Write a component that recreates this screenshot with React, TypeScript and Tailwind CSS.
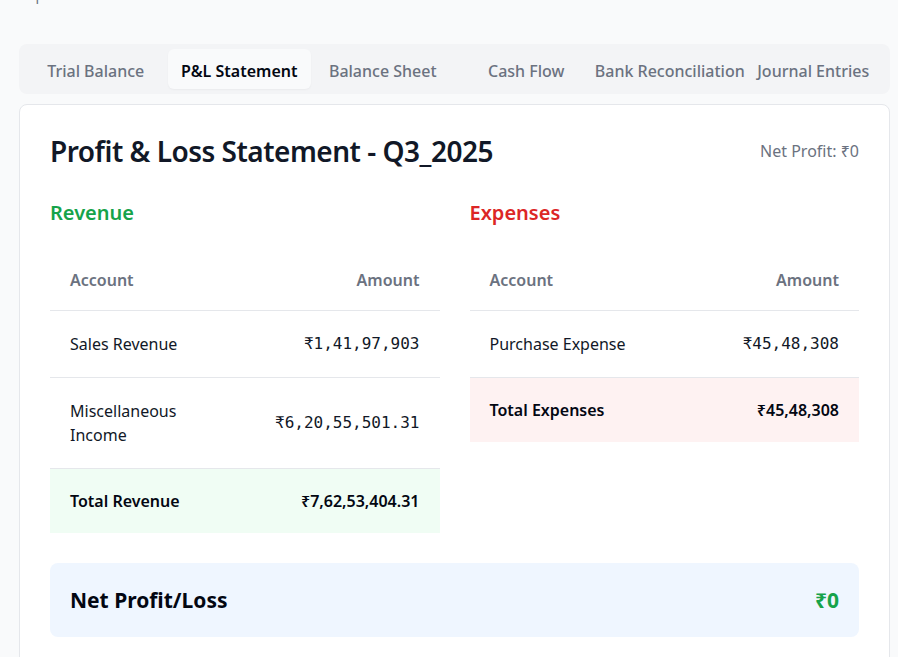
import React from "react";

const tabs = [
  "Trial Balance",
  "P&L Statement",
  "Balance Sheet",
  "Cash Flow",
  "Bank Reconciliation",
  "Journal Entries",
];

function Row({
  name,
  amount,
  nameClass,
}: {
  name: string;
  amount: string;
  nameClass?: string;
}) {
  return (
    <div className="flex items-center justify-between border-b border-[#e5e7eb] px-5 py-[21px]">
      <div className={`text-base leading-6 text-[#111827] ${nameClass ?? ""}`}>{name}</div>
      <div className="font-['DejaVu_Sans_Mono','Liberation_Mono',monospace] text-base leading-6 text-[#111827]">
        {amount}
      </div>
    </div>
  );
}

function TableHead() {
  return (
    <div className="flex items-center justify-between border-b border-[#e5e7eb] px-5 py-[18px]">
      <div className="text-base font-semibold leading-6 text-[#6b7280]">Account</div>
      <div className="text-base font-semibold leading-6 text-[#6b7280]">Amount</div>
    </div>
  );
}

export default function App() {
  return (
    <div className="min-h-screen overflow-hidden bg-[#f9fafb] pl-[19px] pr-2 font-['Noto_Sans','Open_Sans',sans-serif]">
      <p className="-mt-[15px] h-5 text-sm leading-5 text-[#6b7280]">Reports and financial statements</p>

      <div className="mt-[39px] grid grid-cols-6 rounded-lg bg-[#f3f4f6] p-[5px]">
        {tabs.map((t) => (
          <div
            key={t}
            className={`flex h-10 items-center justify-center whitespace-nowrap rounded-md pt-[3px] text-base ${
              t === "P&L Statement"
                ? "bg-[#f9fafb] font-semibold text-[#030712] shadow-[0_1px_2px_rgba(0,0,0,0.04)]"
                : "font-medium text-[#6b7280]"
            }`}
          >
            {t}
          </div>
        ))}
      </div>

      <div className="mt-[10px] rounded-lg border border-[#e5e7eb] bg-white px-[30px] pb-10 pt-7">
        <div className="flex items-center justify-between">
          <h2 className="text-[28px] font-semibold leading-9 tracking-[-0.5px] text-[#111827]">
            Profit &amp; Loss Statement - Q3_2025
          </h2>
          <div className="text-base text-[#6b7280]">Net Profit: ₹0</div>
        </div>

        <div className="mt-[30px] grid grid-cols-2 gap-[30px]">
          <div>
            <h3 className="mb-[23px] text-xl font-semibold leading-7 text-[#16a34a]">Revenue</h3>
            <TableHead />
            <Row name="Sales Revenue" amount="₹1,41,97,903" />
            <Row name="Miscellaneous Income" amount="₹6,20,55,501.31" nameClass="w-[130px]" />
            <div className="flex items-center justify-between bg-[#f0fdf4] px-5 py-5">
              <div className="text-base font-semibold leading-6 text-[#030712]">Total Revenue</div>
              <div className="text-base font-semibold leading-6 text-[#030712]">₹7,62,53,404.31</div>
            </div>
          </div>
          <div>
            <h3 className="mb-[23px] text-xl font-semibold leading-7 text-[#dc2626]">Expenses</h3>
            <TableHead />
            <Row name="Purchase Expense" amount="₹45,48,308" />
            <div className="flex items-center justify-between bg-[#fef2f2] px-5 py-5">
              <div className="text-base font-semibold leading-6 text-[#030712]">Total Expenses</div>
              <div className="text-base font-semibold leading-6 text-[#030712]">₹45,48,308</div>
            </div>
          </div>
        </div>

        <div className="mt-[30px] flex items-center justify-between rounded-lg bg-[#eff6ff] px-5 py-[23px]">
          <div className="text-[21px] font-bold leading-7 text-[#030712]">Net Profit/Loss</div>
          <div className="text-[21px] font-bold leading-7 text-[#16a34a]">₹0</div>
        </div>
      </div>
    </div>
  );
}
